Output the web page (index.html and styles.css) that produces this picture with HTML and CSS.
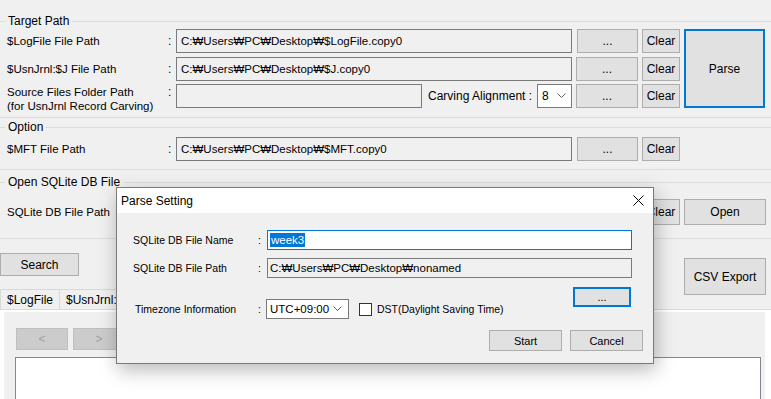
FILE: index.html
```html
<!DOCTYPE html>
<html lang="ko">
<head>
  <meta charset="UTF-8" />
  <title>Parse Setting</title>
  <link rel="stylesheet" href="styles.css">
</head>
<body>
  <section class="group group-target">
    <div class="group-title"><span>Target Path</span></div>
    <div class="form-grid target-grid">
      <span class="lbl">$LogFile File Path</span>
      <span class="colon">:</span>
      <div class="path">C:₩Users₩PC₩Desktop₩$LogFile.copy0</div>
      <button class="btn">...</button>
      <button class="btn">Clear</button>
      <button class="btn btn-default parse">Parse</button>

      <span class="lbl">$UsnJrnl:$J File Path</span>
      <span class="colon">:</span>
      <div class="path">C:₩Users₩PC₩Desktop₩$J.copy0</div>
      <button class="btn">...</button>
      <button class="btn">Clear</button>

      <span class="lbl lbl-two">Source Files Folder Path<br />(for UsnJrnl Record Carving)</span>
      <span class="colon colon-top">:</span>
      <div class="carve">
        <div class="path path-short"></div>
        <span class="carve-lbl">Carving Alignment :</span>
        <div class="combo combo-small">
          <span>8</span>
          <svg class="chev" width="9" height="6" viewBox="0 0 9 6"><polyline points="0.5,0.5 4.5,4.5 8.5,0.5" fill="none" stroke="#606060" stroke-width="1" /></svg>
        </div>
      </div>
      <button class="btn">...</button>
      <button class="btn">Clear</button>
    </div>
  </section>

  <section class="group group-option">
    <div class="group-title"><span>Option</span></div>
    <div class="form-grid option-grid">
      <span class="lbl">$MFT File Path</span>
      <span class="colon">:</span>
      <div class="path">C:₩Users₩PC₩Desktop₩$MFT.copy0</div>
      <button class="btn">...</button>
      <button class="btn">Clear</button>
    </div>
  </section>

  <section class="group group-db">
    <div class="group-title"><span>Open SQLite DB File</span></div>
    <div class="form-grid db-grid">
      <span class="lbl">SQLite DB File Path</span>
      <span class="colon"></span>
      <div class="path"></div>
      <button class="btn"></button>
      <button class="btn">Clear</button>
      <button class="btn">Open</button>
    </div>
  </section>

  <div class="tools">
    <button class="btn search">Search</button>
    <button class="btn export">CSV Export</button>
  </div>

  <div class="tabs">
    <div class="tab">$LogFile</div>
    <div class="tab">$UsnJrnl:$J</div>
  </div>
  <div class="tab-panel">
    <div class="tab-page">
      <div class="nav">
        <button class="btn btn-off">&lt;</button>
        <button class="btn btn-off">&gt;</button>
      </div>
      <div class="list"></div>
    </div>
  </div>

  <!-- modal dialog over the main form -->
  <div class="dialog">
    <div class="dialog-title">
      <span>Parse Setting</span>
      <svg class="close" width="11" height="11" viewBox="0 0 11 11"><path d="M0.5 0.5 L10.5 10.5 M10.5 0.5 L0.5 10.5" stroke="#000" stroke-width="1" /></svg>
    </div>
    <div class="dialog-body">
      <div class="drow">
        <span class="dlbl">SQLite DB File Name</span>
        <span class="dcolon">:</span>
        <div class="dinput dinput-focus"><span class="selected">week3</span></div>
      </div>
      <div class="drow drow-gap">
        <span class="dlbl">SQLite DB File Path</span>
        <span class="dcolon">:</span>
        <div class="dinput dinput-ro">C:₩Users₩PC₩Desktop₩nonamed</div>
      </div>
      <div class="drow-browse">
        <button class="btn btn-default browse">...</button>
      </div>
      <div class="drow">
        <span class="dlbl dlbl-tz">Timezone Information</span>
        <span class="dcolon">:</span>
        <div class="combo combo-tz">
          <span>UTC+09:00</span>
          <svg class="chev" width="9" height="6" viewBox="0 0 9 6"><polyline points="0.5,0.5 4.5,4.5 8.5,0.5" fill="none" stroke="#606060" stroke-width="1" /></svg>
        </div>
        <span class="check"></span>
        <span class="check-lbl">DST(Daylight Saving Time)</span>
      </div>
      <div class="dactions">
        <button class="btn dbtn">Start</button>
        <button class="btn dbtn">Cancel</button>
      </div>
    </div>
  </div>
</body>
</html>
```

FILE: styles.css
```css
* {
  box-sizing: border-box;
}

body {
  margin: 0;
  width: 771px;
  height: 399px;
  overflow: hidden;
  position: relative;
  background: #f0f0f0;
  font-family: 'Liberation Sans', Arial, sans-serif;
  font-size: 11.5px;
  color: #000;
}

/* group boxes */
.group {
  border-bottom: 1px solid #dcdcdc;
}

.group-title {
  display: flex;
  align-items: center;
  height: 12px;
  line-height: 12px;
  white-space: nowrap;
}

.group-title::before {
  content: "";
  width: 5px;
  border-top: 1px solid #dcdcdc;
}

.group-title::after {
  content: "";
  flex: 1;
  border-top: 1px solid #dcdcdc;
}

.group-title span {
  padding: 0 3px;
  font-size: 12px;
}

.group-target {
  padding-top: 15px;
  padding-bottom: 9px;
}

.group-option {
  margin-top: 3px;
  padding-bottom: 8px;
}

.group-db {
  padding-top: 6px;
  padding-bottom: 13px;
}

.form-grid {
  display: grid;
  grid-template-columns: 157px 4px 396px 62px 38px 82px;
  column-gap: 4px;
  padding-left: 7px;
  align-items: start;
}

.target-grid {
  margin-top: 2px;
  grid-template-rows: 28px 27px 24px;
}

.option-grid {
  margin-top: 4px;
}

.db-grid {
  margin-top: 11px;
}

.lbl {
  line-height: 24px;
  white-space: nowrap;
  font-size: 11.5px;
}

.lbl-two {
  line-height: 14px;
  padding-top: 1px;
}

.colon {
  line-height: 24px;
  font-size: 12px;
}

.colon-top {
  line-height: 14px;
  padding-top: 1px;
}

.path {
  height: 24px;
  border: 1px solid #7a7a7a;
  background: #f0f0f0;
  padding-left: 4px;
  line-height: 22px;
  white-space: nowrap;
  font-size: 11.5px;
}

.btn {
  height: 24px;
  padding: 0;
  border: 1px solid #adadad;
  background: #e1e1e1;
  font-family: inherit;
  font-size: 12px;
  color: #000;
}

.form-grid .btn:nth-of-type(1) {
  margin-left: 1px;
}

.btn-default {
  border: 2px solid #0078d7;
}

.parse {
  grid-column: 6;
  grid-row: 1 / span 3;
  height: 79px;
  width: 81px;
}

.db-grid .btn,
.db-grid .path {
  height: 26px;
}

.db-grid .lbl,
.db-grid .colon {
  line-height: 26px;
}

.carve {
  display: flex;
  align-items: center;
}

.path-short {
  width: 246px;
}

.carve-lbl {
  margin-left: 6px;
  font-size: 12px;
}

.combo {
  display: flex;
  align-items: center;
  justify-content: space-between;
  background: #fff;
  border: 1px solid #7a7a7a;
}

.combo-small {
  margin-left: auto;
  width: 35px;
  height: 24px;
  padding: 0 5px 0 4px;
  font-size: 12px;
}

.chev {
  display: block;
}

/* search / export */
.tools {
  height: 50px;
  display: flex;
  justify-content: space-between;
  align-items: flex-start;
}

.search {
  margin-top: 14px;
  width: 79px;
  height: 23px;
}

.export {
  margin-top: 19px;
  margin-right: 5px;
  width: 82px;
  height: 37px;
  position: relative;
}

/* tabs */
.tabs {
  display: flex;
  height: 21px;
  border-bottom: 1px solid #d9d9d9;
}

.tab {
  border: 1px solid #d9d9d9;
  border-bottom: none;
  padding: 0 6px;
  line-height: 20px;
  font-size: 12px;
}

.tab + .tab {
  border-left: none;
}

.tab-panel {
  background: #fff;
  padding: 2px 6px 0 4px;
  height: 90px;
}

.tab-page {
  background: #f0f0f0;
  height: 100%;
  padding: 16px 0 0 12px;
}

.nav {
  display: flex;
  gap: 5px;
}

.btn-off {
  width: 52px;
  height: 22px;
  background: #cccccc;
  border-color: #bfbfbf;
  color: #a0a0a0;
}

.list {
  margin-top: 7px;
  margin-left: -1px;
  width: 746px;
  height: 60px;
  background: #fff;
  border: 1px solid #828790;
}

/* dialog */
.dialog {
  position: absolute;
  left: 116px;
  top: 187px;
  width: 538px;
  height: 177px;
  border: 1px solid #7a7a7a;
  background: #f0f0f0;
  box-shadow: 2px 6px 18px rgba(0, 0, 0, 0.28);
}

.dialog-title {
  height: 25px;
  background: #fff;
  display: flex;
  align-items: center;
  justify-content: space-between;
  padding: 0 9px 0 4px;
  font-size: 12px;
}

.close {
  display: block;
}

.dialog-body {
  padding: 17px 21px 0 16px;
  font-size: 10.5px;
}

.drow {
  display: flex;
  align-items: center;
  height: 20px;
}

.drow-gap {
  margin-top: 8px;
}

.dlbl {
  width: 125px;
  white-space: nowrap;
}

.dlbl-tz {
  padding-left: 2px;
}

.dcolon {
  width: 9px;
}

.dinput {
  flex: 1;
  height: 20px;
  border: 1px solid #7a7a7a;
  padding-left: 2px;
  line-height: 18px;
  white-space: nowrap;
  font-size: 11.5px;
}

.dinput-focus {
  background: #fff;
  border-color: #0078d7;
}

.dinput-ro {
  background: #f0f0f0;
}

.selected {
  background: #0078d7;
  color: #fff;
  padding: 1px 1px;
}

.drow-browse {
  display: flex;
  justify-content: flex-end;
  margin-top: 9px;
  margin-bottom: -8px;
  padding-right: 1px;
}

.browse {
  width: 58px;
  height: 20px;
  font-size: 11px;
}

.combo-tz {
  margin-left: -1px;
  width: 83px;
  height: 20px;
  padding: 0 6px 0 3px;
  font-size: 11.5px;
}

.check {
  margin-left: 10px;
  width: 13px;
  height: 13px;
  border: 1px solid #333;
  background: #fff;
}

.check-lbl {
  margin-left: 5px;
  font-size: 10.5px;
}

.dactions {
  display: flex;
  justify-content: flex-end;
  gap: 8px;
  margin-top: 11px;
  margin-right: -11px;
}

.dbtn {
  width: 73px;
  height: 21px;
  font-size: 11px;
}
```
